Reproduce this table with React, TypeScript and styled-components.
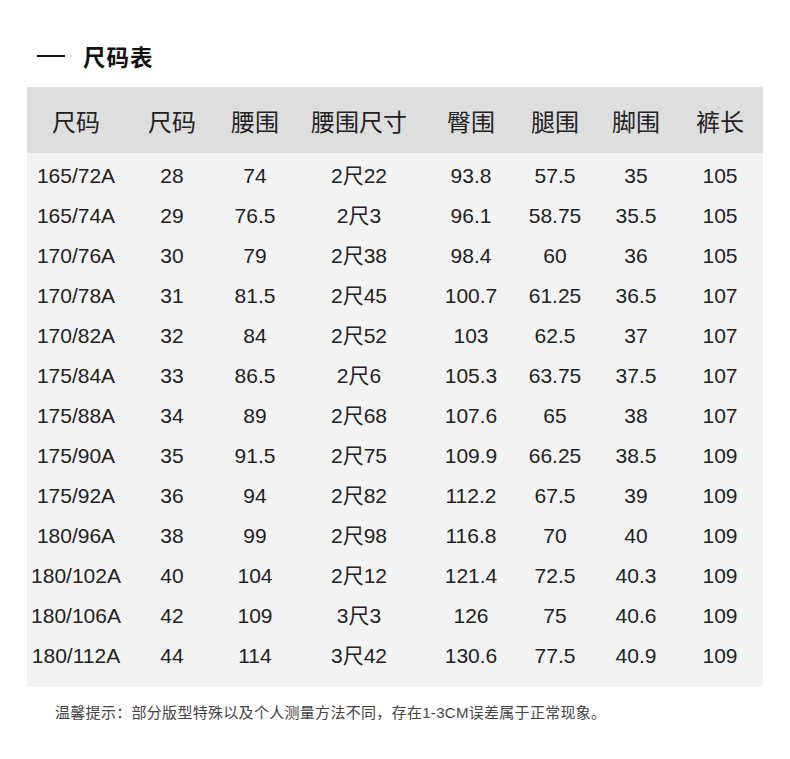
import styled, { createGlobalStyle } from "styled-components"

const GlobalStyle = createGlobalStyle`
    html, body {
        margin: 0;
        padding: 0;
        background: #ffffff;
    }
    body {
        font-family: "Liberation Sans", "Noto Sans CJK SC", sans-serif;
        color: #222;
    }
`

const headers = ["尺码", "尺码", "腰围", "腰围尺寸", "臀围", "腿围", "脚围", "裤长"]

const rows = [
    ["165/72A", "28", "74", "2尺22", "93.8", "57.5", "35", "105"],
    ["165/74A", "29", "76.5", "2尺3", "96.1", "58.75", "35.5", "105"],
    ["170/76A", "30", "79", "2尺38", "98.4", "60", "36", "105"],
    ["170/78A", "31", "81.5", "2尺45", "100.7", "61.25", "36.5", "107"],
    ["170/82A", "32", "84", "2尺52", "103", "62.5", "37", "107"],
    ["175/84A", "33", "86.5", "2尺6", "105.3", "63.75", "37.5", "107"],
    ["175/88A", "34", "89", "2尺68", "107.6", "65", "38", "107"],
    ["175/90A", "35", "91.5", "2尺75", "109.9", "66.25", "38.5", "109"],
    ["175/92A", "36", "94", "2尺82", "112.2", "67.5", "39", "109"],
    ["180/96A", "38", "99", "2尺98", "116.8", "70", "40", "109"],
    ["180/102A", "40", "104", "2尺12", "121.4", "72.5", "40.3", "109"],
    ["180/106A", "42", "109", "3尺3", "126", "75", "40.6", "109"],
    ["180/112A", "44", "114", "3尺42", "130.6", "77.5", "40.9", "109"],
]

export default function App() {
    return <Page>
        <GlobalStyle/>
        <Title>
            <Dash/>
            <span>尺码表</span>
        </Title>
        <Table>
            <HeaderRow>
                {headers.map((h, i) => <HeadCell key={i}>{h}</HeadCell>)}
            </HeaderRow>
            <Body>
                {rows.map((r, i) => <Row key={i}>
                    {r.map((c, j) => <Cell key={j}>{c}</Cell>)}
                </Row>)}
            </Body>
        </Table>
        <Note>温馨提示：部分版型特殊以及个人测量方法不同，存在1-3CM误差属于正常现象。</Note>
    </Page>
}

const Page = styled.div`
    width: 790px;
    height: 759px;
    padding: 40px 27px 0;
    box-sizing: border-box;
`

const Title = styled.h2`
    margin: 0 0 0 10px;
    height: 32px;
    display: flex;
    align-items: center;
    gap: 18px;
    font-family: "Noto Sans CJK SC", sans-serif;
    font-size: 22.5px;
    font-weight: 700;
    color: #111;
    letter-spacing: 1px;
`

const Dash = styled.span`
    width: 28px;
    height: 2px;
    background: #111;
`

const Table = styled.div`
    margin-top: 15px;
    width: 736px;
`

const columns = "98px 94px 72px 136px 88px 80px 82px 86px"

const HeaderRow = styled.div`
    display: grid;
    grid-template-columns: ${columns};
    height: 66px;
    align-items: center;
    background: #dedede;
`

const HeadCell = styled.div`
    text-align: center;
    font-family: "Noto Sans CJK SC", sans-serif;
    font-size: 24px;
    font-weight: 400;
    color: #222;
`

const Body = styled.div`
    background: #f3f3f3;
    padding: 3px 0 11px;
`

const Row = styled.div`
    display: grid;
    grid-template-columns: ${columns};
    height: 40px;
    align-items: center;
`

const Cell = styled.div`
    text-align: center;
    font-size: 21px;
    line-height: 24px;
    color: #222;
`

const Note = styled.p`
    margin: 14px 0 0 28px;
    font-family: "Liberation Sans", "Noto Sans CJK SC", sans-serif;
    font-size: 15px;
    letter-spacing: 0.3px;
    color: #444;
`
